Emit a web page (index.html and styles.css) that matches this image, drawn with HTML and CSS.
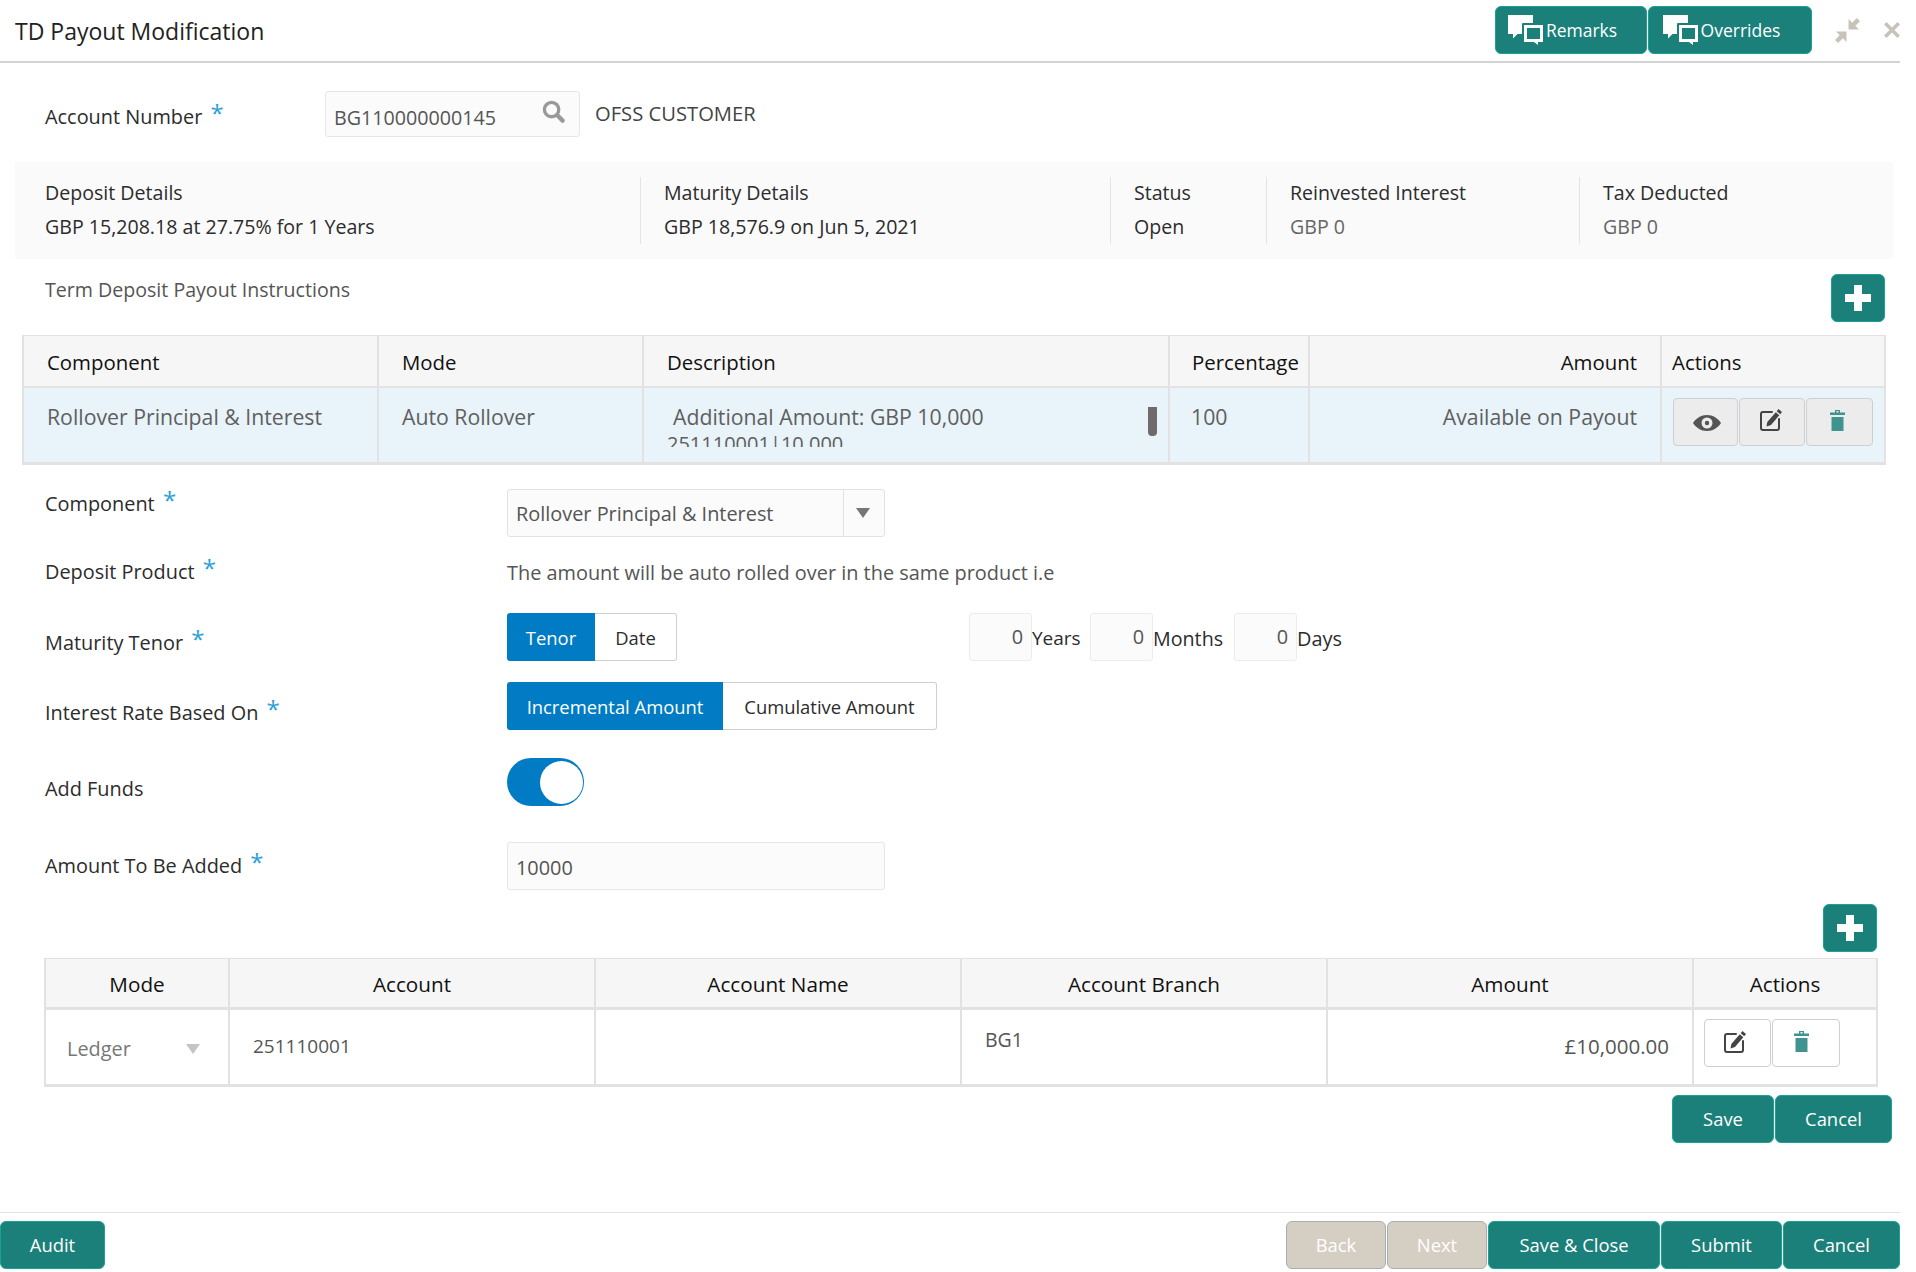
FILE: index.html
```html
<!DOCTYPE html>
<html lang="en">
<head>
<meta charset="utf-8">
<title>TD Payout Modification</title>
<link rel="stylesheet" href="styles.css">
</head>
<body>
<svg class="defs" width="0" height="0" aria-hidden="true">
  <defs>
    <symbol id="chat" viewBox="0 0 36 30">
      <path fill="#fff" d="M0 0h25v8H15a1 1 0 0 0-1 1v10H9.500L5 23.500V19H0z"/>
      <path fill="#fff" fill-rule="evenodd" d="M16 10h19v17h-5v3l-4-3H16zM19 13v11h13V13z"/>
    </symbol>
    <symbol id="eye" viewBox="0 0 28 16">
      <path fill="#555" fill-rule="evenodd" d="M14 0C8 0 3 3.500 0 8c3 4.500 8 8 14 8s11-3.500 14-8c-3-4.500-8-8-14-8zm0 2.500a5.500 5.500 0 1 1 0 11 5.500 5.500 0 0 1 0-11z"/>
      <circle cx="14" cy="8" r="2.200" fill="#555"/>
    </symbol>
    <symbol id="edit" viewBox="0 0 22 22">
      <path fill="none" stroke="#444" stroke-width="2" stroke-linecap="round" d="M12 3H3a2 2 0 0 0-2 2v14a2 2 0 0 0 2 2h14a2 2 0 0 0 2-2v-9"/>
      <path fill="#444" d="M18.500 0l3.500 3-1.800 2.200-3.500-3zM15.800 3.200l3.500 3L11 16l-4.500 1.500.8-4.500z"/>
    </symbol>
    <symbol id="trash" viewBox="0 0 15 21">
      <path fill="#3f9490" d="M5 0h5v2.500h5v2.500H0V2.500h5zM6.500 1v1.500h2V1zM1.500 7h12v14h-12z"/>
    </symbol>
    <symbol id="plus" viewBox="0 0 26 26">
      <path fill="#fff" d="M9 0h8v9h9v8h-9v9H9v-9H0V9h9z"/>
    </symbol>
  </defs>
</svg>

<div class="app">
  <header class="topbar">
    <h1 class="title">TD Payout Modification</h1>
    <div class="top-actions">
      <button class="btn btn-remarks"><svg class="chat-icon"><use href="#chat"/></svg>Remarks</button>
      <button class="btn btn-overrides"><svg class="chat-icon"><use href="#chat"/></svg>Overrides</button>
      <svg class="win-icon win-compress" viewBox="0 0 24 24"><path fill="#c8c3ba" d="M13 1v10h10l-3.500-3.500L24 3l-3-3-4.500 4.500zM11 13v10l-3.500-3.500L3 24l-3-3 4.500-4.500L1 13z"/></svg>
      <svg class="win-icon win-close" viewBox="0 0 16 16"><path fill="#c8c3ba" d="M2.500 0L8 5.500 13.500 0 16 2.500 10.500 8l5.500 5.500-2.500 2.500L8 10.500 2.500 16 0 13.500 5.500 8 0 2.500z"/></svg>
    </div>
  </header>

  <main class="content">
    <div class="account-row">
      <label class="account-label">Account Number <span class="req">*</span></label>
      <div class="field field-account">
        <span>BG110000000145</span>
        <svg class="search" viewBox="0 0 24 24"><circle cx="10" cy="10" r="7.500" fill="none" stroke="#999" stroke-width="3.500"/><path stroke="#999" stroke-width="4.500" stroke-linecap="round" d="M16 16l5.500 5.500"/></svg>
      </div>
      <span class="customer">OFSS CUSTOMER</span>
    </div>

    <section class="summary">
      <div class="sum-col sum-deposit"><div>Deposit Details</div><div>GBP 15,208.18 at 27.75% for 1 Years</div></div>
      <div class="sum-col sum-maturity"><div>Maturity Details</div><div>GBP 18,576.9 on Jun 5, 2021</div></div>
      <div class="sum-col sum-status"><div>Status</div><div>Open</div></div>
      <div class="sum-col sum-reinv"><div>Reinvested Interest</div><div class="muted">GBP 0</div></div>
      <div class="sum-col sum-tax"><div>Tax Deducted</div><div class="muted">GBP 0</div></div>
    </section>

    <div class="instr-row">
      <span class="instr-title">Term Deposit Payout Instructions</span>
      <button class="btn btn-plus"><svg class="plus-icon"><use href="#plus"/></svg></button>
    </div>

    <table class="grid grid-main">
      <colgroup><col class="m1"><col class="m2"><col class="m3"><col class="m4"><col class="m5"><col class="m6"></colgroup>
      <thead>
        <tr><th>Component</th><th>Mode</th><th>Description</th><th class="pct">Percentage</th><th class="right">Amount</th><th class="th-actions">Actions</th></tr>
      </thead>
      <tbody>
        <tr>
          <td>Rollover Principal &amp; Interest</td>
          <td>Auto Rollover</td>
          <td class="desc-cell">
            <div class="desc">
              <div class="desc-a">Additional Amount: GBP 10,000</div>
              <div class="desc-b">251110001|10,000</div>
              <span class="thumb"></span>
            </div>
          </td>
          <td class="pct">100</td>
          <td class="right">Available on Payout</td>
          <td class="td-actions">
            <div class="act-group">
              <button class="act act-grey act-eye"><svg class="ic-eye"><use href="#eye"/></svg></button>
              <button class="act act-grey act-edit"><svg class="ic-edit"><use href="#edit"/></svg></button>
              <button class="act act-grey act-trash"><svg class="ic-trash"><use href="#trash"/></svg></button>
            </div>
          </td>
        </tr>
      </tbody>
    </table>

    <div class="form-row row-component">
      <label class="flabel up10">Component <span class="req">*</span></label>
      <div class="select"><span class="select-text">Rollover Principal &amp; Interest</span><span class="select-sep"></span><span class="caret"></span></div>
    </div>
    <div class="form-row row-product">
      <label class="flabel">Deposit Product <span class="req">*</span></label>
      <div class="plain">The amount will be auto rolled over in the same product i.e</div>
    </div>
    <div class="form-row row-tenor">
      <label class="flabel down7">Maturity Tenor <span class="req">*</span></label>
      <div class="tenor-wrap">
        <div class="seg seg-tenor"><span class="seg-btn on s-tenor">Tenor</span><span class="seg-btn s-date">Date</span></div>
        <div class="unit-row">
          <span class="unit-in">0</span><span class="unit-lbl u-years">Years</span>
          <span class="unit-in">0</span><span class="unit-lbl u-months">Months</span>
          <span class="unit-in">0</span><span class="unit-lbl">Days</span>
        </div>
      </div>
    </div>
    <div class="form-row row-rate">
      <label class="flabel down6">Interest Rate Based On <span class="req">*</span></label>
      <div class="seg"><span class="seg-btn on s-inc">Incremental Amount</span><span class="seg-btn s-cum">Cumulative Amount</span></div>
    </div>
    <div class="form-row row-funds">
      <label class="flabel down6">Add Funds</label>
      <div class="toggle"><span class="knob"></span></div>
    </div>
    <div class="form-row row-amount">
      <label class="flabel">Amount To Be Added <span class="req">*</span></label>
      <div class="field field-amount">10000</div>
    </div>

    <div class="sub-head"><button class="btn btn-plus"><svg class="plus-icon"><use href="#plus"/></svg></button></div>

    <table class="grid grid-sub">
      <colgroup><col class="s1"><col class="s2"><col class="s2"><col class="s2"><col class="s2"><col class="s6"></colgroup>
      <thead>
        <tr><th>Mode</th><th>Account</th><th>Account Name</th><th>Account Branch</th><th>Amount</th><th>Actions</th></tr>
      </thead>
      <tbody>
        <tr>
          <td class="ledger-cell"><div class="ledger"><span>Ledger</span><span class="caret caret-light"></span></div></td>
          <td class="acct-no">251110001</td>
          <td></td>
          <td class="branch">BG1</td>
          <td class="right amt">£10,000.00</td>
          <td class="td-actions-sub">
            <div class="act-group">
              <button class="act act-white a-edit2"><svg class="ic-edit"><use href="#edit"/></svg></button>
              <button class="act act-white a-trash2"><svg class="ic-trash"><use href="#trash"/></svg></button>
            </div>
          </td>
        </tr>
      </tbody>
    </table>

    <div class="save-row">
      <button class="btn w-save">Save</button>
      <button class="btn w-cancel1">Cancel</button>
    </div>
  </main>

  <footer class="footer">
    <button class="btn w-audit">Audit</button>
    <div class="footer-right">
      <button class="btn btn-off w-nav">Back</button>
      <button class="btn btn-off w-nav">Next</button>
      <button class="btn w-saveclose">Save &amp; Close</button>
      <button class="btn w-submit">Submit</button>
      <button class="btn w-cancel2">Cancel</button>
    </div>
  </footer>
</div>
</body>
</html>
```

FILE: styles.css
```css
* { box-sizing: border-box; }
html, body { margin: 0; padding: 0; background: #fff; }
body { font-family: "Open Sans", "Noto Sans", sans-serif; font-size: 19.900px; color: #2c2c2c; }
.defs { display: block; height: 0; }
.app { width: 1900px; height: 1272px; display: flex; flex-direction: column; }

.topbar { height: 63px; border-bottom: 2px solid #d3d3d3; display: flex; align-items: flex-start; justify-content: space-between; padding-left: 15px; flex: none; }
.title { margin: 16px 0 0; font-size: 23px; line-height: 30px; font-weight: 400; color: #222; }
.top-actions { display: flex; align-items: flex-start; padding-top: 6px; }

.btn { height: 48px; background: #1b7f7a; border: 1px solid #17a396; border-radius: 6px; color: #fff; font: inherit; font-size: 18.400px; padding: 0 0 1px; display: inline-flex; align-items: center; justify-content: center; flex: none; margin: 0; }
.btn-remarks { width: 152px; margin-left: 1px; padding-right: 17px; font-size: 17.500px; }
.btn-overrides { width: 164px; margin-left: 1px; padding-right: 17px; font-size: 17.500px; }
.chat-icon { width: 36px; height: 30px; margin-right: 2px; }
.win-icon { flex: none; }
.win-compress { width: 25px; height: 25px; margin: 12px 0 0 23px; }
.win-close { width: 16px; height: 16px; margin: 16px 0 0 24px; }

.content { flex: 1; display: flex; flex-direction: column; }

.account-row { display: flex; align-items: center; height: 46px; margin-top: 28px; padding-left: 45px; }
.account-label { width: 280px; padding-top: 5px; }
.req { color: #2a9fd8; font-size: 24px; line-height: 0; vertical-align: 2px; margin-left: 3px; }
.field { height: 46px; background: #fbfbfb; border: 1px solid #e6e6e6; border-radius: 3px; display: flex; align-items: center; padding-left: 8px; color: #555; }
.field-account { width: 255px; justify-content: space-between; padding-right: 14px; padding-top: 6px; font-size: 19.700px; }
.search { width: 23px; height: 23px; margin-top: -11px; }
.customer { margin-left: 15px; color: #444; margin-top: -2px; font-size: 20.200px; }

.summary { margin: 25px 0 0 15px; width: 1878px; height: 97px; background: #fafafa; display: flex; padding: 15px 0; font-size: 19.600px; }
.sum-col { line-height: 34px; padding-left: 30px; }
.sum-col > div:first-child { margin-top: -1px; }
.sum-col + .sum-col { border-left: 1px solid #e4e4e4; padding-left: 23px; height: 67px; }
.sum-deposit { width: 625px; }
.sum-maturity { width: 470px; }
.sum-status { width: 156px; }
.sum-reinv { width: 313px; }
.sum-tax { width: 300px; }
.muted { color: #666; }

.instr-row { height: 76px; display: flex; justify-content: space-between; align-items: flex-start; padding-left: 45px; padding-right: 15px; }
.instr-title { margin-top: 18px; line-height: 26px; color: #555; font-size: 19.600px; }
.btn-plus { width: 54px; margin-top: 15px; }
.plus-icon { width: 26px; height: 26px; }

.grid { border-collapse: collapse; table-layout: fixed; border-spacing: 0; flex: none; }
.grid th { background: #f6f6f6; font-weight: 500; color: #111; height: 51px; padding: 0; border: 2px solid #e2e2e2; border-top-width: 1px; text-align: left; font-size: 20.400px; }
.grid td { padding: 0; border: 2px solid #e2e2e2; border-top: 0; vertical-align: top; color: #555; }
.grid-main { margin-left: 22px; width: 1862px; }
.m1 { width: 355px; } .m2 { width: 265px; } .m3 { width: 526px; } .m4 { width: 140px; } .m5 { width: 352px; } .m6 { width: 224px; }
.grid-main th { padding-left: 23px; padding-top: 2px; }
.grid-main th.pct { padding-left: 22px; }
.grid-main th.right { text-align: right; padding-right: 23px; }
.grid-main th.th-actions { padding-left: 10px; }
.grid-main td { background: #e8f3fa; height: 77px; padding: 16px 23px 0; line-height: 26px; font-size: 21.250px; color: #5f5f5f; border-bottom-width: 3px; white-space: nowrap; }
.grid-main td.pct { padding-left: 21px; }
.grid-main td.right { text-align: right; }
.grid-main td.desc-cell { padding: 16px 0 0 23px; }
.desc { height: 43px; overflow: hidden; position: relative; padding-right: 20px; }
.desc-a { padding-left: 6px; }
.desc-b { font-size: 20px; line-height: 20px; margin-top: 4px; }
.thumb { position: absolute; right: 11px; top: 3px; width: 9px; height: 29px; background: #706a6a; border-radius: 0 0 4px 4px; }
.grid-main td.td-actions { padding: 10px 0 0 11px; }
.act-group { display: flex; }
.act { height: 48px; border: 1px solid #cfcfcf; border-radius: 4px; padding: 0; display: flex; align-items: center; justify-content: center; margin: 0 1px 0 0; flex: none; }
.act-grey { background: #ececec; }
.act-white { background: #fff; }
.act-eye { width: 65px; }
.act-edit { width: 66px; }
.act-trash { width: 67px; }
.a-edit2 { width: 67px; }
.a-trash2 { width: 68px; }
.ic-eye { width: 28px; height: 16px; margin: 3px 0 0 2px; }
.ic-edit { width: 22px; height: 22px; margin: -3px 3px 0 0; }
.ic-trash { width: 15px; height: 21px; margin: -3px 5px 0 0; }
.a-edit2 .ic-edit { margin-right: 6px; }
.a-trash2 .ic-trash { margin-right: 9px; }

.form-row { display: grid; grid-template-columns: 462px 1fr; padding-left: 45px; align-items: center; flex: none; }
.flabel { line-height: 26px; }
.up10 { margin-top: -18px; }
.down7 { margin-top: 12px; }
.down6 { margin-top: 14px; }
.row-component { height: 48px; margin-top: 24px; }
.row-product { height: 48px; margin-top: 11px; }
.row-tenor { height: 48px; margin-top: 17px; }
.row-rate { height: 48px; margin-top: 21px; }
.row-funds { height: 48px; margin-top: 28px; }
.row-amount { height: 48px; margin-top: 36px; }

.select { width: 378px; height: 48px; border: 1px solid #e2e2e2; border-radius: 3px; background: #fbfbfb; display: flex; align-items: center; padding-left: 8px; color: #555; }
.select-text { width: 327px; white-space: nowrap; }
.select-sep { width: 1px; height: 46px; background: #e2e2e2; }
.caret { width: 0; height: 0; border-left: 7px solid transparent; border-right: 7px solid transparent; border-top: 10px solid #777; margin-left: 12px; }
.caret-light { border-top-color: #c4c4c4; margin-left: 0; }
.plain { color: #555; }

.tenor-wrap { display: flex; }
.seg { display: inline-flex; height: 48px; width: max-content; }
.seg-tenor { width: 462px; flex: none; }
.seg-btn { height: 48px; display: flex; align-items: center; justify-content: center; font-size: 18.400px; background: #fff; border: 1px solid #cfcfcf; border-left: 0; border-radius: 0 3px 3px 0; }
.seg-btn.on { background: #007bc4; color: #fff; border: 0; border-radius: 3px 0 0 3px; }
.s-tenor { width: 88px; }
.s-date { width: 82px; }
.s-inc { width: 216px; }
.s-cum { width: 214px; }
.unit-row { display: flex; align-items: center; }
.unit-in { width: 63px; height: 48px; border: 1px solid #ececec; background: #fbfbfb; border-radius: 3px; text-align: right; padding-right: 8px; line-height: 46px; color: #555; }
.unit-lbl { margin-right: 10px; width: 48px; padding-top: 2px; }
.u-years { width: 48px; font-size: 19px; }
.u-months { width: 71px; font-size: 19.700px; }

.toggle { width: 77px; height: 48px; border-radius: 24px; background: #007bc4; display: flex; justify-content: flex-end; padding: 3px 1px 2px 0; }
.knob { width: 43px; height: 43px; border-radius: 50%; background: #fff; }
.field-amount { width: 378px; height: 48px; padding-top: 2px; }

.sub-head { margin-top: 14px; padding-right: 23px; display: flex; justify-content: flex-end; flex: none; }
.sub-head .btn-plus { margin-top: 0; }
.grid-sub { margin: 6px 0 0 44px; width: 1832px; }
.s1 { width: 184px; } .s2 { width: 366px; } .s6 { width: 184px; }
.grid-sub th { text-align: center; height: 50px; border-bottom-width: 3px; padding-top: 2px; font-size: 20.700px; }
.grid-sub td { height: 77px; background: #fff; border-bottom-width: 3px; }
.ledger { display: flex; align-items: center; justify-content: space-between; padding: 26px 28px 0 21px; color: #777; line-height: 26px; }
.grid-sub td.acct-no { padding: 23px 0 0 23px; line-height: 26px; font-size: 19px; }
.grid-sub td.branch { padding: 17px 0 0 23px; line-height: 26px; font-size: 19.500px; }
.grid-sub td.amt { padding: 23px 23px 0 0; text-align: right; line-height: 26px; font-size: 20.500px; }
.grid-sub td.td-actions-sub { padding: 9px 0 0 10px; }

.save-row { display: flex; justify-content: flex-end; padding-right: 8px; margin-top: 8px; gap: 1px; flex: none; }
.w-save { width: 102px; }
.w-cancel1 { width: 117px; }

.footer { height: 60px; border-top: 1px solid #dfe3e6; display: flex; justify-content: space-between; padding-top: 8px; flex: none; }
.footer-right { display: flex; gap: 1px; }
.w-audit { width: 105px; }
.w-nav { width: 100px; }
.w-saveclose { width: 172px; }
.w-submit { width: 121px; }
.w-cancel2 { width: 117px; }
.btn-off { background: #d5cec3; border-color: #a9aeb0; color: #fff; }
```
